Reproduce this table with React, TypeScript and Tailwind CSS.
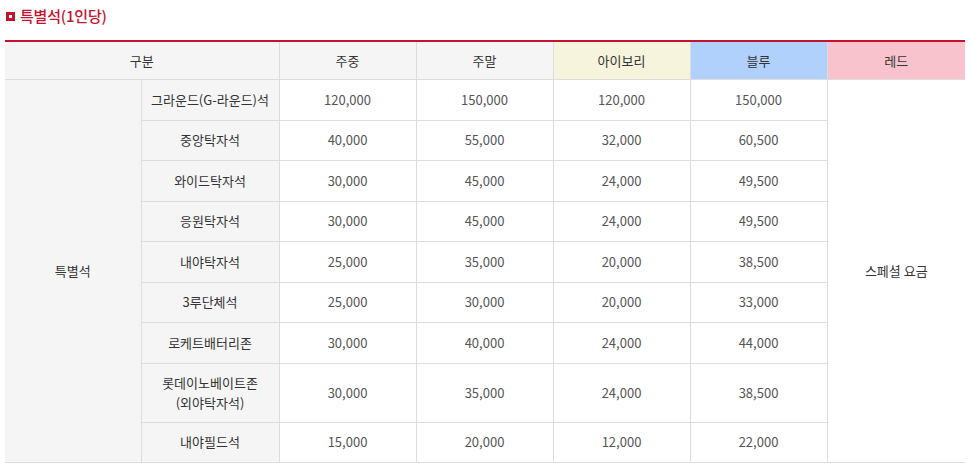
import React from "react";

const rows: { name: React.ReactNode; vals: string[]; h: string }[] = [
  { name: "그라운드(G-라운드)석", vals: ["120,000", "150,000", "120,000", "150,000"], h: "h-[41px]" },
  { name: "중앙탁자석", vals: ["40,000", "55,000", "32,000", "60,500"], h: "h-[40px]" },
  { name: "와이드탁자석", vals: ["30,000", "45,000", "24,000", "49,500"], h: "h-[41px]" },
  { name: "응원탁자석", vals: ["30,000", "45,000", "24,000", "49,500"], h: "h-[40px]" },
  { name: "내야탁자석", vals: ["25,000", "35,000", "20,000", "38,500"], h: "h-[41px]" },
  { name: "3루단체석", vals: ["25,000", "30,000", "20,000", "33,000"], h: "h-[40px]" },
  { name: "로케트배터리존", vals: ["30,000", "40,000", "24,000", "44,000"], h: "h-[41px]" },
  {
    name: (
      <>
        롯데이노베이트존
        <br />
        (외야탁자석)
      </>
    ),
    vals: ["30,000", "35,000", "24,000", "38,500"],
    h: "h-[59px]",
  },
  { name: "내야필드석", vals: ["15,000", "20,000", "12,000", "22,000"], h: "h-[40px]" },
];

export default function App() {
  return (
    <div
      className="w-[975px] h-[470px] bg-white overflow-hidden"
      style={{ fontFamily: '"Noto Sans CJK KR", "Noto Sans", sans-serif' }}
    >
      <div className="flex items-center pl-[6px] pt-[5px] h-[22px] box-content">
        <span className="w-[9px] h-[9px] bg-[#c4122f] flex items-center justify-center">
          <span className="w-[3px] h-[3px] bg-white" />
        </span>
        <span className="ml-[5px] text-[15px] leading-[22px] text-[#c4122f] font-medium tracking-[-0.2px]">
          특별석(1인당)
        </span>
      </div>
      <div className="pl-[5px] pt-[13px]">
        <table className="w-[960px] border-collapse table-fixed text-[13px] text-center border-t-2 border-t-[#c4122f]">
          <colgroup>
            <col className="w-[136px]" />
            <col className="w-[138px]" />
            <col className="w-[137px]" />
            <col className="w-[137px]" />
            <col className="w-[137px]" />
            <col className="w-[137px]" />
            <col className="w-[138px]" />
          </colgroup>
          <thead>
            <tr className="h-[38px] text-[#333]">
              <th colSpan={2} className="font-normal bg-[#f5f5f5] border border-[#dddddd] border-t-0 border-l-0">
                구분
              </th>
              <th className="font-normal bg-[#f5f5f5] border border-[#dddddd] border-t-0">주중</th>
              <th className="font-normal bg-[#f5f5f5] border border-[#dddddd] border-t-0">주말</th>
              <th className="font-normal bg-[#f6f4dd] border border-[#dddddd] border-t-0">아이보리</th>
              <th className="font-normal bg-[#b0d1fb] border border-[#dddddd] border-t-0">블루</th>
              <th className="font-normal bg-[#f8c3cd] border border-[#dddddd] border-t-0 border-r-0">레드</th>
            </tr>
          </thead>
          <tbody>
            {rows.map((r, i) => (
              <tr key={i} className={r.h}>
                {i === 0 && (
                  <td rowSpan={rows.length} className="bg-[#f5f5f5] text-[#333] border border-[#dddddd] border-l-0">
                    특별석
                  </td>
                )}
                <td className="bg-[#f5f5f5] text-[#333] border border-[#dddddd] leading-[20px]">{r.name}</td>
                {r.vals.map((v, j) => (
                  <td key={j} className="text-[#555] border border-[#dddddd]">
                    {v}
                  </td>
                ))}
                {i === 0 && (
                  <td rowSpan={rows.length} className="text-[#333] border border-[#dddddd] border-r-0">
                    스페셜 요금
                  </td>
                )}
              </tr>
            ))}
          </tbody>
        </table>
      </div>
    </div>
  );
}
